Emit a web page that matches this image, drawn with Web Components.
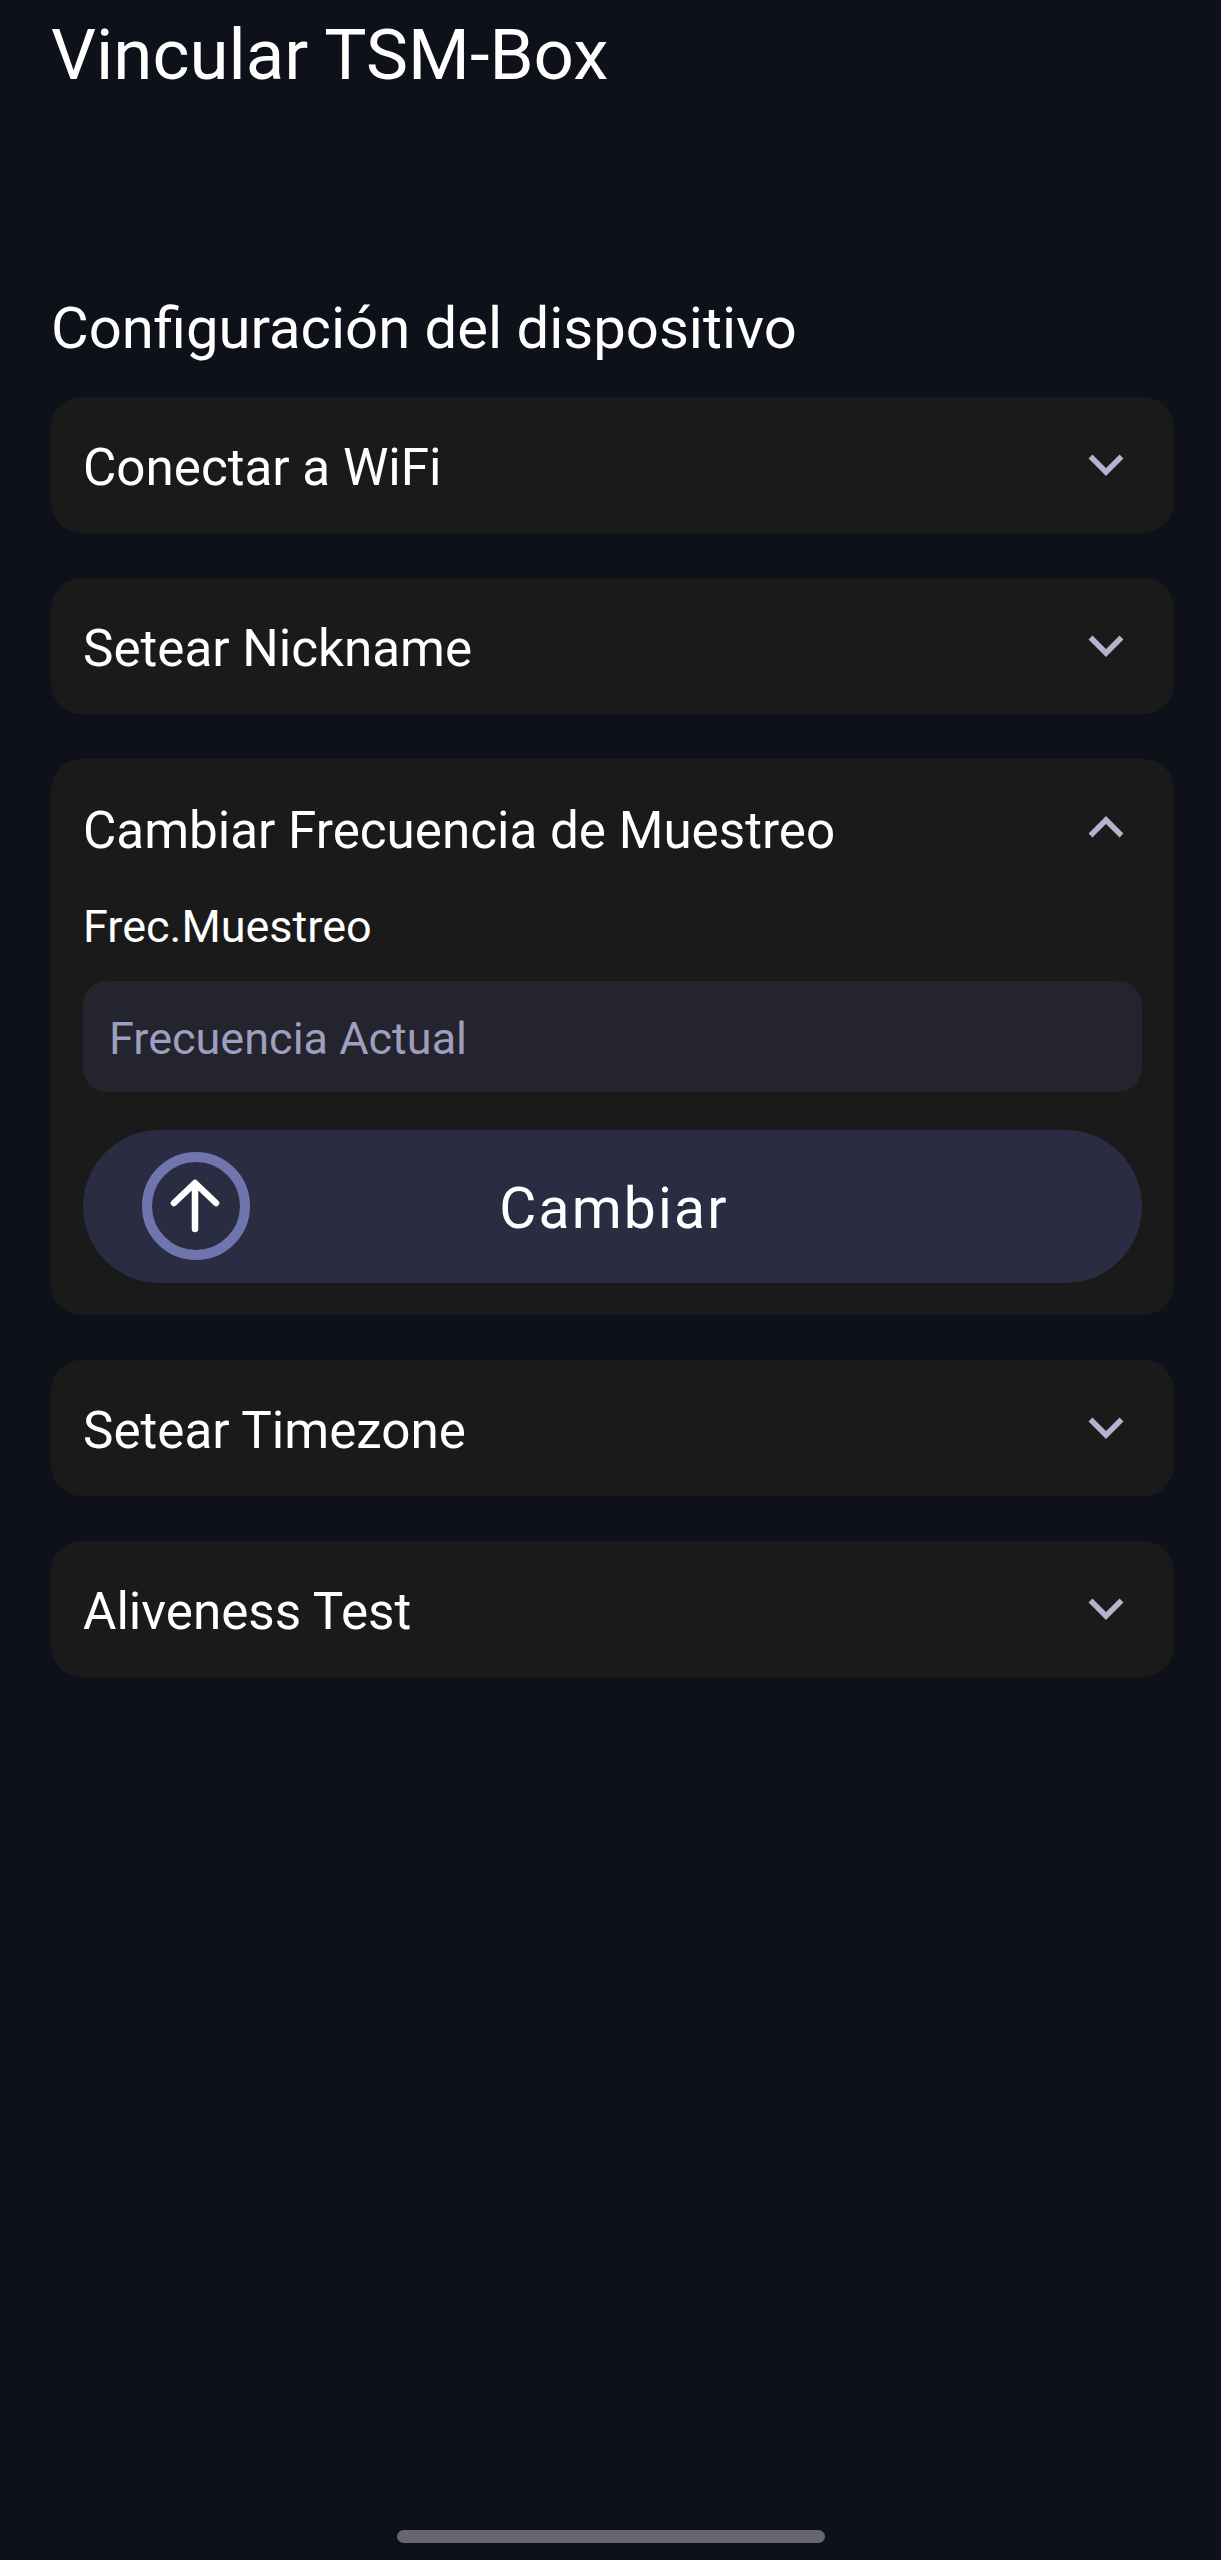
<!DOCTYPE html>
<html lang="es"><head><meta charset="utf-8"><style>
html,body{margin:0;padding:0;background:#0e101a}
body{font-family:Roboto,"Liberation Sans",sans-serif;color:#fff}
</style></head><body>
<app-screen>
  <span slot="title">Vincular TSM-Box</span>
  <span slot="section">Configuración del dispositivo</span>
  <acc-card title="Conectar a WiFi"></acc-card>
  <acc-card title="Setear Nickname"></acc-card>
  <acc-card title="Cambiar Frecuencia de Muestreo" open>
    <field-input label="Frec.Muestreo" placeholder="Frecuencia Actual"></field-input>
    <upload-button>Cambiar</upload-button>
  </acc-card>
  <acc-card title="Setear Timezone"></acc-card>
  <acc-card title="Aliveness Test"></acc-card>
</app-screen>
<script>
function def(name,html){
  customElements.define(name,class extends HTMLElement{
    connectedCallback(){
      if(this.shadowRoot)return;
      const r=this.attachShadow({mode:'open'});
      r.innerHTML=typeof html==='function'?html(this):html;
    }
  });
}
def('app-screen',`<style>
:host{display:flex;flex-direction:column;min-height:2560px;box-sizing:border-box;padding:0 47px 0 51px}
.title{font-size:70.8px;line-height:82px;height:82px;margin-top:14px}
.section{font-size:58px;line-height:66px;margin-top:199px;margin-bottom:36px}
.list{display:flex;flex-direction:column;gap:45px}
.bar{width:428px;height:13px;border-radius:7px;background:#66666f;margin:auto auto 17px;position:relative;left:-2px}
</style>
<div class="title"><slot name="title"></slot></div>
<div class="section"><slot name="section"></slot></div>
<div class="list"><slot></slot></div>
<div class="bar"></div>`);
def('acc-card',el=>{const open=el.hasAttribute('open');return `<style>
:host{display:block;background:#1a1a1a;border-radius:30px;padding:0 32px}
.head{display:flex;align-items:center;justify-content:space-between;height:136px;font-size:51.2px;line-height:60px}
.head span{padding-top:${open?7:6}px}
svg{width:48px;height:48px;margin-right:12px;display:block;fill:none;stroke:#b4b4d0;stroke-width:5.5;stroke-linecap:butt;stroke-linejoin:miter}
.body{display:${open?'block':'none'};padding-bottom:32px;margin-top:6px}
</style>
<div class="head"><span>${el.getAttribute('title')}</span>
<svg viewBox="0 0 48 48"><path d="${open?'M8.5 32.5 L24 17 L39.5 32.5':'M8.5 15.5 L24 31 L39.5 15.5'}"/></svg></div>
<div class="body"><slot></slot></div>`});
def('field-input',el=>`<style>
:host{display:block}
.label{font-size:45px;line-height:52px;margin-bottom:28px}
.box{height:111px;box-sizing:border-box;background:#23242e;border-radius:24px;padding:3px 26px 0;display:flex;align-items:center;font-size:45px;color:#9f9ebe}
</style><div class="label">${el.getAttribute('label')}</div>
<div class="box">${el.getAttribute('placeholder')}</div>`);
def('upload-button',`<style>
:host{display:flex;align-items:center;position:relative;margin-top:38px;height:153px;background:#2a2c42;border-radius:77px;justify-content:center;font-size:57px;letter-spacing:2.2px}
span{padding:3px 0 0 3px}
svg{position:absolute;left:58px;top:21px;width:110px;height:110px}
</style>
<svg viewBox="0 0 110 110" fill="none"><circle cx="55" cy="55" r="49" stroke="#6e76ad" stroke-width="10"/><path d="M54 78V33M33 52L54 32L75 52" stroke="#fff" stroke-width="6.5" stroke-linecap="round" stroke-linejoin="round"/></svg>
<span><slot></slot></span>`);
</script>
</body></html>
